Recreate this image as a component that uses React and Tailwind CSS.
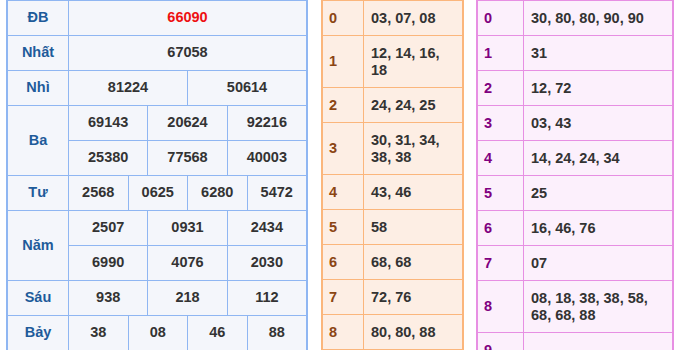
import React from "react";

const font = { fontFamily: '"Liberation Sans", Arial, sans-serif' };

function LCell({ children, span, className = "" }) {
  const spans = { 12: "col-span-12", 6: "col-span-6", 4: "col-span-4", 3: "col-span-3" };
  return (
    <div className={`${spans[span]} bg-[#f4f6fb] flex items-center justify-center text-[14.5px] font-bold text-[#333333] ${className}`}>
      {children}
    </div>
  );
}

function Label({ children, rows = 1 }) {
  return (
    <div className={`${rows === 2 ? "row-span-2" : ""} bg-[#f4f6fb] flex items-center justify-center text-[14.5px] font-bold text-[#1e5b9a]`}>
      {children}
    </div>
  );
}

function LeftTable() {
  return (
    <div className="w-[302px] shrink-0 grid grid-cols-[60px_repeat(12,minmax(0,1fr))] auto-rows-[34px] gap-px bg-[#8fb6f2] border-2 border-[#8fb6f2]">
      <Label>ĐB</Label>
      <LCell span={12} className="text-[#ee1111]">66090</LCell>
      <Label>Nhất</Label>
      <LCell span={12}>67058</LCell>
      <Label>Nhì</Label>
      <LCell span={6}>81224</LCell>
      <LCell span={6}>50614</LCell>
      <Label rows={2}>Ba</Label>
      <LCell span={4}>69143</LCell>
      <LCell span={4}>20624</LCell>
      <LCell span={4}>92216</LCell>
      <LCell span={4}>25380</LCell>
      <LCell span={4}>77568</LCell>
      <LCell span={4}>40003</LCell>
      <Label>Tư</Label>
      <LCell span={3}>2568</LCell>
      <LCell span={3}>0625</LCell>
      <LCell span={3}>6280</LCell>
      <LCell span={3}>5472</LCell>
      <Label rows={2}>Năm</Label>
      <LCell span={4}>2507</LCell>
      <LCell span={4}>0931</LCell>
      <LCell span={4}>2434</LCell>
      <LCell span={4}>6990</LCell>
      <LCell span={4}>4076</LCell>
      <LCell span={4}>2030</LCell>
      <Label>Sáu</Label>
      <LCell span={4}>938</LCell>
      <LCell span={4}>218</LCell>
      <LCell span={4}>112</LCell>
      <Label>Bảy</Label>
      <LCell span={3}>38</LCell>
      <LCell span={3}>08</LCell>
      <LCell span={3}>46</LCell>
      <LCell span={3}>88</LCell>
    </div>
  );
}

const head = [
  ["0", "03, 07, 08"],
  ["1", "12, 14, 16, 18"],
  ["2", "24, 24, 25"],
  ["3", "30, 31, 34, 38, 38"],
  ["4", "43, 46"],
  ["5", "58"],
  ["6", "68, 68"],
  ["7", "72, 76"],
  ["8", "80, 80, 88"],
];

const tail = [
  ["0", "30, 80, 80, 90, 90"],
  ["1", "31"],
  ["2", "12, 72"],
  ["3", "03, 43"],
  ["4", "14, 24, 24, 34"],
  ["5", "25"],
  ["6", "16, 46, 76"],
  ["7", "07"],
  ["8", "08, 18, 38, 38, 58, 68, 68, 88"],
  ["9", ""],
];

function MiddleTable() {
  return (
    <div className="w-[143px] shrink-0 grid grid-cols-[40px_minmax(0,1fr)] gap-px bg-[#fbb67c] border-2 border-[#fbb67c] self-start">
      {head.map(([k, v]) => (
        <React.Fragment key={k}>
          <div className="bg-[#fdeee4] flex items-center pl-[6px] text-[14.5px] font-bold text-[#8b4513] leading-[17px]">{k}</div>
          <div className="bg-[#fdeee4] pl-[7px] pr-3 pt-[9px] pb-[8px] text-[14.5px] font-bold text-[#333333] leading-[17px] min-h-[34px]">{v}</div>
        </React.Fragment>
      ))}
    </div>
  );
}

function RightTable() {
  return (
    <div className="w-[198px] shrink-0 grid grid-cols-[45px_minmax(0,1fr)] gap-px bg-[#e78fe3] border-2 border-[#e78fe3] self-start">
      {tail.map(([k, v]) => (
        <React.Fragment key={k}>
          <div className="bg-[#fcf0fc] flex items-center pl-[6px] text-[14.5px] font-bold text-[#800080] leading-[17px]">{k}</div>
          <div className="bg-[#fcf0fc] pl-[7px] pr-3 pt-[9px] pb-[8px] text-[14.5px] font-bold text-[#333333] leading-[17px] min-h-[34px]">{v}</div>
        </React.Fragment>
      ))}
    </div>
  );
}

export default function App() {
  return (
    <div className="w-[680px] h-[350px] overflow-hidden bg-white" style={font}>
      <div className="flex items-start pl-[6px] -mt-px">
        <LeftTable />
        <div className="ml-[13px]">
          <MiddleTable />
        </div>
        <div className="ml-[12px]">
          <RightTable />
        </div>
      </div>
    </div>
  );
}
